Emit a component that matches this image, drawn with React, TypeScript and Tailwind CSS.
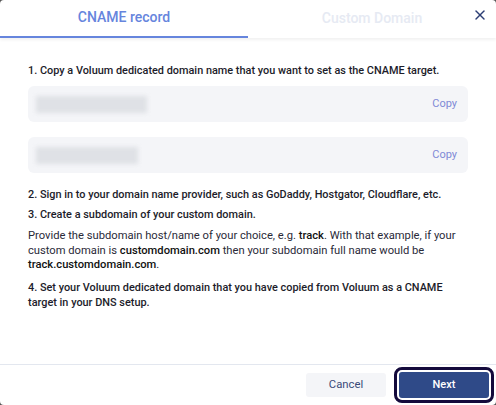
import { X } from 'lucide-react';

const font = { fontFamily: 'Roboto, "Liberation Sans", sans-serif' };

function CopyRow({ w }: { w: string }) {
  return (
    <div className="flex h-9 items-center justify-between rounded-md bg-[#f4f5f8] pl-2 pr-[11px]">
      <div className={`h-[17px] ${w} bg-[#dfe1e6] blur-[2px]`} />
      <span className="text-[11px] text-[#7f8ad6]">Copy</span>
    </div>
  );
}

export default function App() {
  return (
    <div className="h-[405px] w-[496px] bg-[#555]" style={font}>
      <div className="flex h-full flex-col overflow-hidden rounded-[4px] bg-white">
        {/* Tabs */}
        <div className="relative flex h-[38px] shadow-[0_2px_3px_rgba(0,0,0,0.06)]">
          <div className="flex w-1/2 items-center justify-center border-b-2 border-[#6685dd] pb-[2px] text-[14px] font-medium text-[#6685dd]">
            CNAME record
          </div>
          <div className="flex w-1/2 items-center justify-center pb-[2px] text-[14px] font-medium text-[#e6eaf3]">
            Custom Domain
          </div>
          <button className="absolute right-[8px] top-[7px] text-[#2c3e75]">
            <X className="h-[16px] w-[16px]" strokeWidth={2.2} />
          </button>
        </div>

        {/* Body */}
        <div className="flex-1 px-7 pt-[25px] text-[11.2px] text-[#2a2a38]">
          <p className="text-[10.9px] font-medium leading-[15px] text-[#1c1c2a]">1. Copy a Voluum dedicated domain name that you want to set as the CNAME target.</p>
          <div className="mt-[8px] space-y-[15px]">
            <CopyRow w="w-[111px]" />
            <CopyRow w="w-[102px]" />
          </div>
          <p className="mt-[14px] text-[10.9px] font-medium leading-[15px] text-[#1c1c2a]">2. Sign in to your domain name provider, such as GoDaddy, Hostgator, Cloudflare, etc.</p>
          <p className="mt-[5px] text-[10.9px] font-medium leading-[15px] text-[#1c1c2a]">3. Create a subdomain of your custom domain.</p>
          <p className="mt-[7px] leading-[14.5px]">
            Provide the subdomain host/name of your choice, e.g. <b className="font-medium text-[#111]">track</b>. With that example, if your custom domain is <b className="font-medium text-[#111]">customdomain.com</b> then your subdomain full name would be <b className="font-medium text-[#111]">track.customdomain.com</b>.
          </p>
          <p className="mt-[7px] text-[10.9px] font-medium leading-[15px] text-[#1c1c2a]">4. Set your Voluum dedicated domain that you have copied from Voluum as a CNAME target in your DNS setup.</p>
        </div>

        {/* Footer */}
        <div className="flex h-[41px] items-center justify-end gap-[13px] border-t border-[#e3e7ef] pr-[7px]">
          <button className="h-[24px] w-[80px] rounded-[3px] bg-[#f4f5f8] text-[11.3px] text-[#3a4a78]">Cancel</button>
          <button className="h-[26px] w-[90px] rounded-[3px] bg-[#2f4a88] text-[11px] font-medium text-white outline outline-[3px] outline-offset-[2px] outline-[#140a3c]">Next</button>
        </div>
      </div>
    </div>
  );
}
